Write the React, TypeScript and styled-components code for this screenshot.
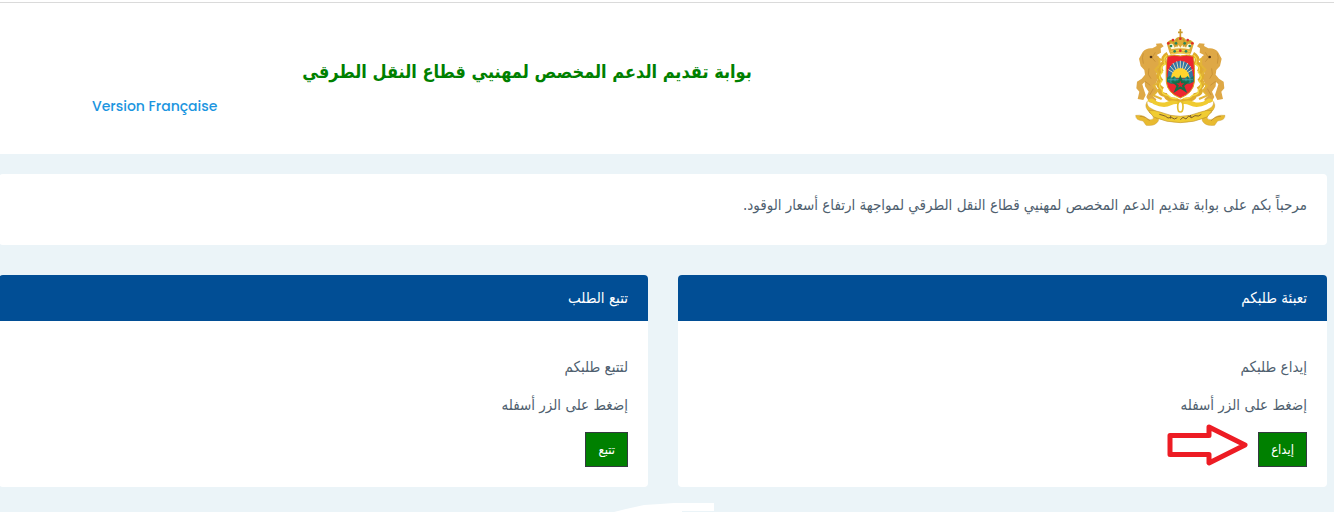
import React from "react";
import styled, { createGlobalStyle } from "styled-components";

const GlobalStyle = createGlobalStyle`
  * { box-sizing: border-box; }
  html { overflow: hidden; }
  body {
    margin: 0;
    background: #ebf4f8;
    color: #4f5f6f;
    font-family: "DejaVu Sans Condensed", "DejaVu Sans", sans-serif;
    font-size: 15px;
  }
  p, h1, h2 { margin: 0; }
`;

const Page = styled.div`
  direction: rtl;
`;

const Header = styled.header`
  display: grid;
  grid-template-columns: 3fr 10fr;
  height: 152px;
  margin-top: 2px;
  border-top: 1px solid #dadada;
  background: #fff;
  box-shadow: 0 -2px 0 #fff;
`;

const LogoCell = styled.div`
  display: flex;
  justify-content: center;
  align-items: flex-start;
  padding-top: 25px;
`;

const TitleCell = styled.div`
  padding: 54px 0 0 28px;
`;

const Title = styled.h1`
  color: #008000;
  font-family: "DejaVu Sans Condensed", "DejaVu Sans", sans-serif;
  font-size: 18px;
  font-weight: 700;
  line-height: 30px;
  text-align: center;
  white-space: nowrap;
`;

const LanguageRow = styled.div`
  direction: ltr;
  padding: 8px 0 0 64px;
`;

const LanguageLink = styled.a`
  color: #1b95e0;
  font-family: Poppins, Inter, sans-serif;
  font-size: 14px;
  font-weight: 500;
  line-height: 22px;
  text-decoration: none;
`;

const Main = styled.main`
  display: grid;
  grid-template-columns: 1fr 1fr;
  gap: 30px;
  margin-left: -1px;
  padding: 20px 7px 16px 0;
`;

const Panel = styled.section`
  overflow: hidden;
  border-radius: 4px;
  background: #fff;
`;

const Welcome = styled(Panel)`
  grid-column: 1 / -1;
  height: 71px;
  padding: 16px 20px;
  line-height: 30px;
`;

const PanelTitle = styled.h2`
  padding: 8px 20px;
  background: #014e95;
  color: #fff;
  font-size: 15px;
  font-weight: 400;
  line-height: 30px;
`;

const PanelBody = styled.div`
  display: flex;
  flex-direction: column;
  gap: 8px;
  padding: 31px 20px 20px;
  line-height: 30px;
`;

const Actions = styled.div`
  display: flex;
  align-items: flex-end;
  gap: 9px;
  height: 35px;
  margin-top: 4px;

  svg { flex: none; margin-bottom: 1px; }
`;

const ActionButton = styled.button`
  height: 35px;
  padding: 0 12px;
  border: 1px solid #343a40;
  background: #008000;
  color: #fff;
  font-family: inherit;
  font-size: 13px;
`;

const Footer = styled.footer`
  display: flex;
  justify-content: center;
  padding-right: 7px;
`;

const Arrow = () => (
  <svg width="82" height="42" viewBox="0 0 82 42" aria-hidden="true">
    <path d="M3 11.500H42V3L78 21L42 39V30.500H3Z" fill="#fff" stroke="#ed1c24" strokeWidth="5" strokeLinejoin="round" />
  </svg>
);

const Supporter = () => (
  <g>
    <path d="M69 97Q80 84 98 86L111 79L109 72L125 71L132 80L123 86L124 99L111 106Q125 114 121 131L116 144L127 154L122 165L109 158L115 177L106 196L113 215L100 230L110 239L106 252L89 248L80 232L87 216L76 200L75 187L68 194L72 207L78 226L71 241L54 238L59 216L50 206L52 186L66 177L76 165L74 151L63 139L58 117Z" fill="#dea846" />
    <path d="M71 101Q66 112 71 132M107 98L97 114L107 126M88 146L86 164L94 177M76 185L92 197M101 207L90 226" fill="none" stroke="#c08a30" strokeWidth="2" />
    <circle cx="94" cy="112" r="4" fill="#4e331c" />
    <path d="M144 103Q126 113 134 129Q117 137 124 152Q111 166 122 180Q108 194 124 205Q114 221 137 226Q144 241 164 240L182 247" fill="none" stroke="#dfac2c" strokeWidth="13" />
    <path d="M142 107Q128 118 136 133Q118 142 128 158Q112 174 126 184Q112 200 128 211Q126 226 146 227Q155 239 174 236" fill="none" stroke="#f5dc43" strokeWidth="4" />
    <path d="M133 123L119 118L120 136L107 150L119 168M118 187L102 198L114 213L101 227L126 238" fill="none" stroke="#e3b436" strokeWidth="6" />
    <path d="M182 248Q160 238 142 246Q120 254 100 237Q88 234 82 246Q94 244 102 254Q132 268 154 257Q170 249 180 256Z" fill="#f0cb31" />
    <path d="M82 246Q72 264 90 277Q104 285 101 297Q94 303 82 297Q72 284 48 287Q47 302 70 304L79 317Q106 321 116 304Q124 278 96 267Q82 261 82 246Z" fill="#e8ba30" stroke="#bd8e2b" strokeWidth="1" />
    <path d="M60 290Q80 290 90 304M88 278Q104 282 112 297" fill="none" stroke="#b58128" strokeWidth="2" />
  </g>
);

const Emblem = () => (
  <svg width="92" height="100" viewBox="43 25 276 300" role="img" aria-label="المملكة المغربية">
    <Supporter />
    <g transform="translate(364 0) scale(-1 1)"><Supporter /></g>
    <path d="M86 273Q104 270 124 278Q152 290 182 290Q212 290 240 278Q260 270 278 273L262 292Q222 309 182 309Q142 309 102 292Z" fill="#f0cc32" stroke="#c3952c" strokeWidth="2" />
    <path d="M143 110Q164 103 182 109Q200 103 221 110Q226 139 224 187Q221 220 182 235Q143 220 140 187Q138 139 143 110Z" fill="#ec2630" stroke="#d9a51b" strokeWidth="3" />
    <path d="M144 175Q143 128 182 123Q221 128 220 175Z" fill="#3277a5" />
    <path d="M182 123V149M171 125L176 149M160 130L170 151M151 139L165 155M146 150L162 160M193 125L188 149M204 130L194 151M213 139L199 155M218 150L202 160" stroke="#ddd6ba" strokeWidth="3" />
    <path d="M154 174Q158 147 182 145Q206 147 210 174Z" fill="#ffd42d" />
    <path d="M142 174L151 168L156 176L163 169L171 177L183 174L194 177L204 169L210 177L222 168V186L210 192H154L142 186Z" fill="#167b69" />
    <path d="M145 180H220M154 173V189M166 173V190M199 173V190M211 173V189" stroke="#4fa7b7" strokeWidth="2" />
    <path d="M182 174L187 188H202L190 198L196 212L182 203L168 212L174 198L162 188H177Z" fill="#d9212b" stroke="#176d47" strokeWidth="6" />
    <path d="M149 98L141 71Q150 56 164 62Q169 52 182 51Q195 52 200 62Q214 56 223 71L215 98L211 105Q182 98 153 105Z" fill="#dcac37" />
    <path d="M149 75Q159 66 165 84Q175 68 182 84Q189 68 199 84Q205 66 215 75L209 89Q182 82 155 89Z" fill="#fff8dc" />
    <path d="M182 28V60M175 38H189M149 68Q163 57 167 81M215 68Q201 57 197 81M175 57Q166 65 173 81M189 57Q198 65 191 81" fill="none" stroke="#c99a2c" strokeWidth="5" />
    <path d="M153 95Q182 88 211 95M153 102Q182 95 211 102" fill="none" stroke="#f3d249" strokeWidth="3" />
    {[[146, 71], [160, 61], [182, 57], [204, 61], [218, 71], [182, 93]].map(([cx, cy]) => (
      <circle key={`${cx}-${cy}`} cx={cx} cy={cy} r="4" fill="#e02b2b" />
    ))}
    {[[154, 79], [169, 71], [195, 71], [210, 79], [165, 95], [199, 95]].map(([cx, cy]) => (
      <circle key={`${cx}-${cy}`} cx={cx} cy={cy} r="4" fill="#28865b" />
    ))}
    <ellipse cx="182" cy="261" rx="8" ry="16" fill="#fff" stroke="#e4bd29" strokeWidth="5" />
    <path d="M119 284L130 287L138 290L145 295L155 293L164 298L173 294M182 300L190 293L199 298L207 289L216 294L226 288L236 289L245 284M153 288V297M212 286L215 295" fill="none" stroke="#81602c" strokeWidth="3" />
  </svg>
);

const FooterCurve = () => (
  <svg width="100" height="9" viewBox="0 0 100 9" aria-hidden="true">
    <path d="M0 9L12 6L30 2L46 1L60 0H100V8H68V9Z" fill="#fff" />
  </svg>
);

type ServiceProps = { title: string; lead: string; action: string; highlighted?: boolean };

const Service = ({ title, lead, action, highlighted }: ServiceProps) => (
  <Panel>
    <PanelTitle>{title}</PanelTitle>
    <PanelBody>
      <p>{lead}</p>
      <p>إضغط على الزر أسفله</p>
      <Actions>
        <ActionButton type="button">{action}</ActionButton>
        {highlighted && <Arrow />}
      </Actions>
    </PanelBody>
  </Panel>
);

export default function App() {
  return (
    <Page lang="ar">
      <GlobalStyle />
      <Header>
        <LogoCell><Emblem /></LogoCell>
        <TitleCell>
          <Title>بوابة تقديم الدعم المخصص لمهنيي قطاع النقل الطرقي</Title>
          <LanguageRow><LanguageLink href="#fr" lang="fr">Version Française</LanguageLink></LanguageRow>
        </TitleCell>
      </Header>
      <Main>
        <Welcome>
          <p>مرحباً بكم على بوابة تقديم الدعم المخصص لمهنيي قطاع النقل الطرقي لمواجهة ارتفاع أسعار الوقود.</p>
        </Welcome>
        <Service title="تعبئة طلبكم" lead="إيداع طلبكم" action="إيداع" highlighted />
        <Service title="تتبع الطلب" lead="لتتبع طلبكم" action="تتبع" />
      </Main>
      <Footer><FooterCurve /></Footer>
    </Page>
  );
}
